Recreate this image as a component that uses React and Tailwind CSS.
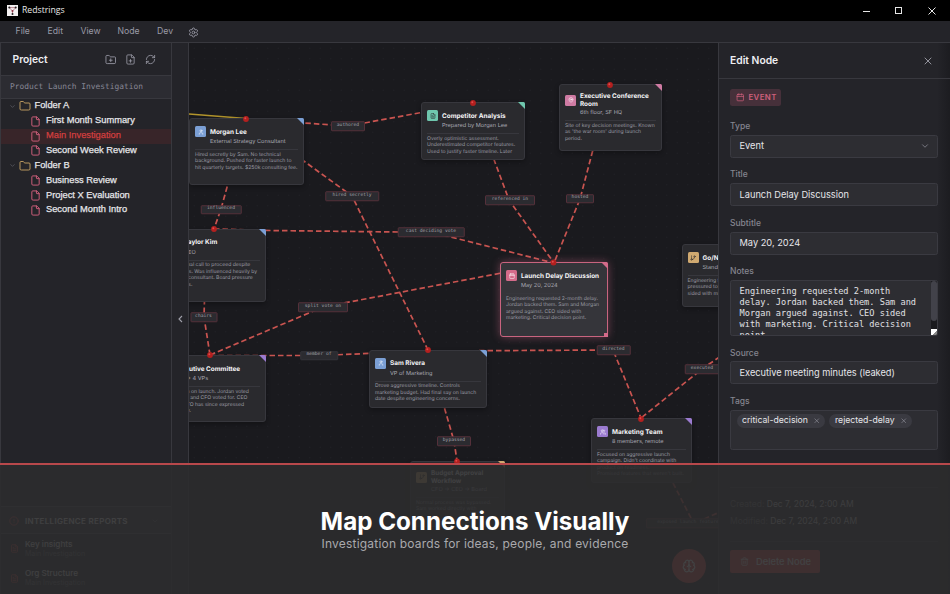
import React from 'react';
import {
  AlertCircle, Brain, Calendar, ChevronDown, File, FileText, Folder, FolderPlus, FilePlus,
  GitBranch, MapPin, RefreshCw, Settings, Trash2, User, Users, X,
} from 'lucide-react';

const MENU = ['File', 'Edit', 'View', 'Node', 'Dev'];

const TREE = [
  { name: 'Folder A', folder: true },
  { name: 'First Month Summary' },
  { name: 'Main Investigation', active: true },
  { name: 'Second Week Review' },
  { name: 'Folder B', folder: true },
  { name: 'Business Review' },
  { name: 'Project X Evaluation' },
  { name: 'Second Month Intro' },
];

// Board coordinates start at the top left of the canvas
const NODES = [
  {
    x: 0, y: 76, w: 115, h: 67, color: '#7b9fd4', icon: User,
    title: ['Morgan Lee'], subtitle: 'External Strategy Consultant',
    notes: ['Hired secretly by Sam. No technical', 'background. Pushed for faster launch to', 'hit quarterly targets. $250k consulting fee.'],
  },
  {
    x: -26, y: 186.5, w: 103, h: 73.5, color: '#7b9fd4', icon: User,
    title: ['Taylor Kim'], subtitle: 'CEO',
    notes: ['Made final call to proceed despite', 'concerns. Was influenced heavily by', 'outside consultant. Board pressure', 'accounts.'],
  },
  {
    x: -36, y: 313, w: 112.5, h: 67, color: '#9b7bd0', icon: Users,
    title: ['Executive Committee'], subtitle: 'CEO + 4 VPs',
    notes: ['Key decision on launch. Jordan voted', 'against, VPs and CFO voted for. CEO', 'objected. CTO has since expressed', 'doubts lately.'],
  },
  {
    x: 232, y: 60, w: 104, h: 58, color: '#6fc7ae', icon: FileText, dark: true,
    title: ['Competitor Analysis'], subtitle: 'Prepared by Morgan Lee',
    notes: ['Overly optimistic assessment.', 'Underestimated competitor features.', 'Used to justify faster timeline. Later'],
  },
  {
    x: 370, y: 42, w: 103, h: 67, color: '#cf7ba3', icon: MapPin,
    title: ['Executive Conference', 'Room'], subtitle: '6th floor, SF HQ',
    notes: ['Site of key decision meetings. Known', "as 'the war room' during launch", 'period.'],
  },
  {
    x: 311, y: 220, w: 107.5, h: 75, color: '#d46b8a', icon: Calendar, selected: true,
    title: ['Launch Delay Discussion'], subtitle: 'May 20, 2024',
    notes: ['Engineering requested 2-month delay.', 'Jordan backed them. Sam and Morgan', 'argued against. CEO sided with', 'marketing. Critical decision point.'],
  },
  {
    x: 492.5, y: 202, w: 104, h: 63, color: '#d0a970', icon: GitBranch, dark: true,
    title: ['Go/No-Go Decision'], subtitle: 'Standing meeting',
    notes: ['Engineering felt', 'pressured to agree.', 'sided with marketing.'],
  },
  {
    x: 180, y: 307.5, w: 118, h: 58.5, color: '#7b9fd4', icon: User,
    title: ['Sam Rivera'], subtitle: 'VP of Marketing',
    notes: ['Drove aggressive timeline. Controls', 'marketing budget. Had final say on launch', 'date despite engineering concerns.'],
  },
  {
    x: 402, y: 376, w: 100.5, h: 65, color: '#9b7bd0', icon: Users,
    title: ['Marketing Team'], subtitle: '8 members, remote',
    notes: ['Focused on aggressive launch', 'campaign. Didn\'t coordinate with', 'product on readiness.', 'Promised features that weren\'t built.'],
  },
  {
    x: 221, y: 419, w: 95, h: 66, color: '#d0a970', icon: GitBranch, dark: true,
    title: ['Budget Approval', 'Workflow'], subtitle: 'CFO → CEO → Board',
    notes: ['Normal process was bypassed.', 'Sam worked directly with'],
  },
];

const EDGES = [
  'M57 77L159 84L284 61',
  'M57 77L163 154L239 308',
  'M45 120L32 167L25 187',
  'M25 187L82 188.5L209 190L242 190L365 221',
  'M21 313L134 265L365 221',
  'M16 240L15 275L21 313',
  'M21 313.5L130 313.5L239 309',
  'M284 61L320 158L365 221',
  'M421 43L391 157L365 221',
  'M239 309L424 308L452 376',
  'M545 305L513 327L452 376',
  'M239 309L265 399L268 419',
  'M484 441L503 478M515 477L540 466',
];

const LABELS = [
  { x: 159, y: 84, w: 34, text: 'authored' },
  { x: 163, y: 154, w: 53.5, text: 'hired secretly' },
  { x: 32, y: 167.5, w: 40.5, text: 'influenced' },
  { x: 242, y: 190, w: 66.5, text: 'cast deciding vote' },
  { x: 134, y: 265, w: 50, text: 'split vote on' },
  { x: 14.5, y: 275, w: 27, text: 'chairs' },
  { x: 130, y: 313.5, w: 37.5, text: 'member of', muted: true },
  { x: 321, y: 158, w: 50, text: 'referenced in' },
  { x: 391, y: 156.5, w: 28, text: 'hosted' },
  { x: 424.5, y: 308, w: 34.5, text: 'directed' },
  { x: 513, y: 327, w: 34.5, text: 'executed' },
  { x: 265, y: 399, w: 34, text: 'bypassed' },
  { x: 499, y: 481, w: 84, text: 'exposed launch feature' },
];

const PINS = [[57, 77], [25, 187], [21, 313], [284, 61], [421, 43], [364.5, 220.5], [239, 308], [452, 377], [268, 419.5]];

function TitleBar() {
  return (
    <div className="flex h-[21px] shrink-0 items-center bg-black pl-[7px] font-['Open_Sans',sans-serif]">
      <svg viewBox="0 0 11 11" className="h-[11px] w-[11px]">
        <rect width="11" height="11" fill="#f4f0f1" />
        <path d="M2.2 2.6H8.8M2.2 2.6L5.5 6L8.8 2.6M5.5 6V9" stroke="#b0707c" strokeWidth=".8" fill="none" />
        <circle cx="2.3" cy="2.6" r="1" fill="#222" />
        <circle cx="8.7" cy="2.6" r="1" fill="#222" />
        <circle cx="5.5" cy="6" r="1" fill="#8e3344" />
        <circle cx="5.5" cy="9" r="1" fill="#222" />
      </svg>
      <span className="ml-1 flex-1 text-[8.700px] text-[#e8e8e8]">Redstrings</span>
      <svg viewBox="0 0 84 21" className="mr-1 h-[21px] w-[84px] text-[#e6e6e6]" fill="none" stroke="currentColor">
        <path d="M1 11.500H8" />
        <rect x="33.5" y="7.5" width="6" height="6" />
        <path d="M66.500 7.500L73.500 14.500M73.500 7.500L66.500 14.500" />
      </svg>
    </div>
  );
}

function MenuBar() {
  return (
    <div className="flex h-[22px] shrink-0 items-center border-b border-[#38383e] bg-[#242429] pt-px pl-[15.500px] text-[8.700px] text-[#9a9aa6]">
      <span className="w-8">{MENU[0]}</span>
      <span className="w-[33px]">{MENU[1]}</span>
      <span className="w-[37px]">{MENU[2]}</span>
      <span className="w-[39.500px]">{MENU[3]}</span>
      <span className="w-[31px]">{MENU[4]}</span>
      <Settings size={11} strokeWidth={1.9} />
    </div>
  );
}

function TreeRow({ item }) {
  if (item.folder) {
    return (
      <div className="flex h-[14.850px] items-center pl-[8px]">
        <ChevronDown size={7} className="text-[#6a6a74]" />
        <Folder size={12} strokeWidth={1.8} className="ml-[2.500px] text-[#c9a565]" />
        <span className="ml-1 text-[#e6e6ea]">{item.name}</span>
      </div>
    );
  }
  return (
    <div className={`flex h-[14.850px] items-center pl-[29px] ${item.active ? 'bg-[#382529]' : ''}`}>
      <File size={11} strokeWidth={2.1} className="text-[#d0607c]" />
      <span className={`ml-[5px] ${item.active ? 'text-[#d23f3f]' : 'text-[#e6e6ea]'}`}>{item.name}</span>
    </div>
  );
}

function Report({ title }) {
  return (
    <div className="flex h-[29.500px] items-center gap-[6px] pl-[9px]">
      <FileText size={9} className="text-[#d94a4a]" />
      <div className="leading-[10px]">
        <div className="text-[8.200px] font-medium text-[#e6e6ea]">{title}</div>
        <div className="text-[7px] text-[#6a6a74]">Main Investigation</div>
      </div>
    </div>
  );
}

function Sidebar() {
  return (
    <div className="flex w-[172px] shrink-0 flex-col border-r border-l border-[#38383e] bg-[#242429]">
      <div className="flex h-8 items-center pt-px pr-[15px] pl-[11.500px]">
        <h2 className="flex-1 text-[10.300px] font-semibold text-[#eeeef2]">Project</h2>
        <div className="flex items-center gap-[9px] text-[#9a9aa6]">
          <FolderPlus size={11.500} strokeWidth={1.8} />
          <FilePlus size={11} strokeWidth={1.8} />
          <RefreshCw size={11} strokeWidth={1.8} />
        </div>
      </div>
      <div className="flex h-6 items-center border-y border-[#38383e] bg-[#2c2c32] pl-[9px] font-['DejaVu_Sans_Mono',monospace] text-[7.900px] text-[#878795]">
        Product Launch Investigation
      </div>
      <div className="flex-1 font-['Liberation_Sans',sans-serif] text-[9.300px] [-webkit-text-stroke:0.25px]">
        {TREE.map((item) => <TreeRow key={item.name} item={item} />)}
      </div>
      <div className="h-[88px]">
        <div className="flex h-[28px] items-center gap-[6px] border-y border-[#4a4a52] bg-[#2f2f36] pt-px pl-[8px] text-[8px] font-semibold tracking-[0.32px] text-[#e6e6ea]">
          <AlertCircle size={10} className="text-[#d94a4a]" />
          <span className="flex-1">INTELLIGENCE REPORTS</span>
          <ChevronDown size={8} className="mr-3 text-[#6a6a74]" />
        </div>
        <Report title="Key insights" />
        <Report title="Org Structure" />
      </div>
    </div>
  );
}

function BoardNode({ node }) {
  const Icon = node.icon;
  return (
    <div
      className={`absolute rounded-[3px] border px-[5px] pt-[7px] whitespace-nowrap ${
        node.selected
          ? 'border-[1.500px] border-[#c9647f] bg-[#35353a] shadow-[0_0_8px_rgba(212,107,138,0.45)]'
          : 'border-[#37373d] bg-[#2a2a2e] shadow-[0_2px_5px_rgba(0,0,0,0.3)]'
      }`}
      style={{ left: node.x, top: node.y, width: node.w, height: node.h }}
    >
      <svg viewBox="0 0 7 7" className="absolute -top-px -right-px h-[7px] w-[7px]">
        <path d="M0 0H5.500Q7 0 7 1.500V7Z" fill={node.color} />
      </svg>
      <div className="flex items-center gap-[4px]">
        <div
          className={`flex h-[11px] w-[11px] shrink-0 items-center justify-center rounded-[1.500px] ${node.dark ? 'text-[#26262a]' : 'text-white'}`}
          style={{ backgroundColor: node.color }}
        >
          <Icon size={6} strokeWidth={2} />
        </div>
        <div className="text-[6.400px] leading-[8px] font-bold text-[#f4f4f6]">
          {node.title.map((line) => <div key={line}>{line}</div>)}
        </div>
      </div>
      <div className="mt-px ml-[15px] text-[5.600px] leading-[8px] text-[#a8a8b2]">{node.subtitle}</div>
      <div className="mt-[3px] border-t border-[#37373d] pt-[1.500px] text-[5.080px] leading-[6.600px] text-[#9a9aa3]">
        {node.notes.map((line) => <div key={line}>{line}</div>)}
      </div>
      {node.selected && <div className="absolute -right-px -bottom-px h-[4px] w-[4px] bg-[#d46b8a]" />}
    </div>
  );
}

function Board() {
  return (
    <div className="relative w-[529px] shrink-0 overflow-hidden bg-[#1a1a1e] bg-[radial-gradient(circle,#242429_0.6px,transparent_0.9px)] bg-[size:10.500px_10.500px]">
      <div className="absolute inset-x-0 -top-px bottom-0 [text-rendering:geometricPrecision]">
        <svg className="absolute inset-0 h-full w-full" fill="none">
          <path d="M0 72L57 76.500" stroke="#b3952c" strokeWidth="1.300" />
          {EDGES.map((d) => (
            <path key={d} d={d} stroke="#c95450" strokeWidth="1.700" strokeDasharray="5.500 3" />
          ))}
        </svg>
        {NODES.map((node) => <BoardNode key={node.title[0]} node={node} />)}
        {LABELS.map((label) => (
          <div
            key={label.text}
            className={`absolute flex h-[9.500px] -translate-x-1/2 -translate-y-1/2 items-center justify-center rounded-[1px] border bg-[#2b2b30] font-['DejaVu_Sans_Mono',monospace] text-[4.650px] leading-[6px] whitespace-nowrap text-[#a2a2ab] ${
              label.muted ? 'border-[#35353b]' : 'border-[#55303a]'
            }`}
            style={{ left: label.x, top: label.y, width: label.w }}
          >
            {label.text}
          </div>
        ))}
        <svg className="absolute inset-0 h-full w-full">
          {PINS.map(([x, y]) => (
            <g key={`${x}-${y}`}>
              <circle cx={x} cy={y} r="2.900" fill="#b3201f" />
              <circle cx={x - 0.7} cy={y - 0.8} r="1" fill="#e0494a" />
            </g>
          ))}
        </svg>
        <div className="absolute top-[507px] left-[483px] flex h-[34px] w-[34px] items-center justify-center rounded-full bg-[#d94a4a] text-white">
          <Brain size={14} />
        </div>
      </div>
    </div>
  );
}

function Field({ label, children }) {
  return (
    <div className="mb-[10.700px]">
      <div className="mb-[3px] h-[11.900px] text-[8.500px] leading-[12px] font-medium text-[#85858f]">{label}</div>
      {children}
    </div>
  );
}

function TextInput({ value }) {
  return (
    <div className="flex h-[23px] items-center rounded-[2.500px] border border-[#3a3a41] bg-[#2d2d32] px-[8.500px] text-[9.250px] text-[#e6e6ea]">
      {value}
    </div>
  );
}

function EditPanel() {
  return (
    <div className="flex w-[232px] shrink-0 flex-col border-l border-[#38383e] bg-[#242429] bg-[linear-gradient(to_right,transparent_218px,#1d1d21_230px)]">
      <div className="flex h-[36px] shrink-0 items-center justify-between border-b border-[#38383e] pr-[16.500px] pl-[11px]">
        <h2 className="text-[10.300px] font-semibold text-[#eeeef2]">Edit Node</h2>
        <X size={12} strokeWidth={1.8} className="text-[#a0a0aa]" />
      </div>
      <div className="pt-[10px] pr-[12.500px] pl-[11px]">
        <div className="mb-[13.700px] flex h-[17px] w-[51px] items-center gap-[4px] rounded-[2.500px] bg-[#46303a] pl-[6px] text-[7.800px] font-semibold tracking-[0.4px] text-[#d0607c]">
          <Calendar size={8.500} className="shrink-0" />
          EVENT
        </div>
        <Field label="Type">
          <div className="flex h-[23px] items-center justify-between rounded-[2.500px] border border-[#3a3a41] bg-[#2d2d32] pr-[7px] pl-[8.500px] text-[9.250px] text-[#e6e6ea]">
            Event
            <ChevronDown size={10} className="text-[#85858f]" />
          </div>
        </Field>
        <Field label="Title"><TextInput value="Launch Delay Discussion" /></Field>
        <Field label="Subtitle"><TextInput value="May 20, 2024" /></Field>
        <Field label="Notes">
          <div className="relative h-[55.500px] overflow-hidden rounded-[2.500px] border border-[#3a3a41] bg-[#2d2d32] pt-[5px] pl-[8.500px] font-['DejaVu_Sans_Mono',monospace] text-[8.630px] leading-[10.850px] whitespace-nowrap text-[#e0e0e4]">
            Engineering requested 2-month<br />
            delay. Jordan backed them. Sam and<br />
            Morgan argued against. CEO sided<br />
            with marketing. Critical decision<br />
            point.
            <div className="absolute top-0 right-0 h-full w-[6px] bg-[#1a1a1e]">
              <div className="h-10 rounded-[3px] bg-[#42424a]" />
            </div>
            <div className="absolute right-0 bottom-0 h-[6px] w-[6px] bg-[linear-gradient(135deg,#fff_60%,#888_60%)]" />
          </div>
        </Field>
        <Field label="Source"><TextInput value="Executive meeting minutes (leaked)" /></Field>
        <Field label="Tags">
          <div className="flex h-10 items-start gap-1 rounded-[2.500px] border border-[#3a3a41] bg-[#2d2d32] pt-[3px] pl-[5.500px] text-[8.700px] text-[#e6e6ea]">
            {['critical-decision', 'rejected-delay'].map((tag) => (
              <span key={tag} className="flex h-[14px] items-center gap-[5px] rounded-full bg-[#3a3a41] pr-[5px] pl-[5.500px]">
                {tag}
                <X size={7.500} className="text-[#92929b]" />
              </span>
            ))}
          </div>
        </Field>
        <div className="mt-[37px] border-y border-[#38383e] pt-2 pb-[11px] text-[8.500px] leading-[17px] text-[#6a6a74]">
          <div>Created: <span className="text-[#c8c8d0]">Dec 7, 2024, 2:00 AM</span></div>
          <div>Modified: <span className="text-[#c8c8d0]">Dec 7, 2024, 2:00 AM</span></div>
        </div>
        <div className="mt-[8.500px] flex h-[23px] w-[90px] items-center gap-[7px] rounded-[2px] bg-[#d94a4a] pl-[10px] text-[9.300px] font-medium text-white">
          <Trash2 size={9} />
          Delete Node
        </div>
      </div>
    </div>
  );
}

export default function App() {
  return (
    <div className="relative flex h-[594px] w-[950px] flex-col overflow-hidden bg-[#242429] font-['Inter',sans-serif]">
      <TitleBar />
      <MenuBar />
      <div className="flex min-h-0 flex-1">
        <Sidebar />
        <div className="flex w-[17px] shrink-0 items-center justify-center border-r border-[#38383e]">
          <svg viewBox="0 0 5 8" className="h-[8px] w-[5px]" fill="none" stroke="#a0a0aa" strokeWidth="1.100">
            <path d="M4 1L1 4L4 7" />
          </svg>
        </div>
        <Board />
        <EditPanel />
      </div>

      {/* Caption */}
      <div className="absolute inset-x-0 bottom-0 flex h-[131px] flex-col items-center border-t-2 border-[#b8484b] bg-[rgba(44,44,45,0.9)]">
        <h1 className="mt-[40px] text-[24.200px] leading-[34px] font-bold text-white">Map Connections Visually</h1>
        <p className="-mt-[3.500px] text-[12px] leading-[16px] tracking-[0.2px] text-[#a9a9ad]">
          Investigation boards for ideas, people, and evidence
        </p>
      </div>
    </div>
  );
}
